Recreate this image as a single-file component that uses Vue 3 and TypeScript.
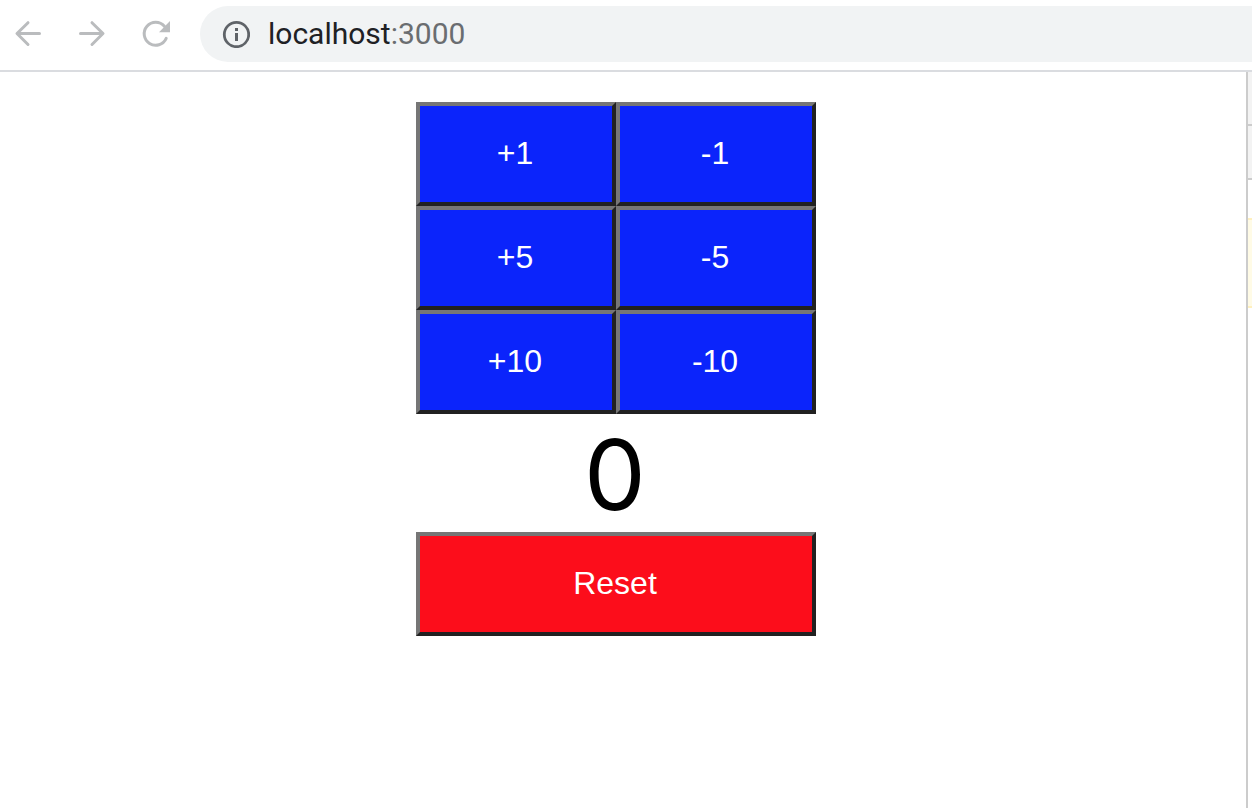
<script setup lang="ts">
import { ref } from 'vue'

const count = ref<number>(0)
const steps: number[] = [1, -1, 5, -5, 10, -10]

function label(step: number): string {
  return step > 0 ? `+${step}` : `${step}`
}
</script>

<template>
  <div class="browser">
    <header class="toolbar">
      <nav class="nav" aria-label="Browser navigation">
        <button class="nav-button" type="button" aria-label="Back">
          <svg viewBox="0 0 32 32"><path d="M27.5 15.5H5.5M16 4.7L5 15.5l11 11" /></svg>
        </button>
        <button class="nav-button" type="button" aria-label="Forward">
          <svg viewBox="0 0 32 32"><path d="M4.5 15.5h22M16 4.7l11 10.8-11 11" /></svg>
        </button>
        <button class="nav-button" type="button" aria-label="Reload">
          <svg viewBox="0 0 32 32">
            <path d="M26.2 20.4A11.5 11.5 0 1 1 24.4 8.2" />
            <path class="solid" d="M30 3V14.2H19z" />
          </svg>
        </button>
      </nav>
      <div class="address">
        <svg class="info" viewBox="0 0 28 28" aria-hidden="true">
          <circle cx="14.5" cy="14.5" r="12.2" />
          <path d="M13 8h3v3h-3zM13 13h3v8h-3z" />
        </svg>
        <a class="url" href="#"><span class="host">localhost</span>:3000</a>
      </div>
    </header>
    <div class="content">
      <main class="page">
        <div class="counter">
          <div class="steps">
            <button
              v-for="step in steps"
              :key="step"
              class="key"
              type="button"
              @click="count += step"
            >{{ label(step) }}</button>
          </div>
          <output class="value">{{ count }}</output>
          <button class="key reset" type="button" @click="count = 0">Reset</button>
        </div>
      </main>
      <aside class="panel">
        <div class="bar"></div>
        <div class="bar"></div>
        <div class="blank"></div>
        <div class="warning"></div>
      </aside>
    </div>
  </div>
</template>

<style>
body {
  background: #ffffff;
}
</style>

<style scoped>
.browser {
  display: flex;
  flex-direction: column;
  min-height: 100vh;
}

.toolbar {
  display: flex;
  align-items: center;
  box-sizing: border-box;
  height: 72px;
  padding-bottom: 2px;
  border-bottom: 2px solid #dadce0;
}

.nav {
  display: flex;
  gap: 32px;
  padding: 0 28px 0 12px;
}

.nav-button {
  width: 32px;
  height: 32px;
  padding: 0;
  border: 0;
  background: none;
}

.nav-button svg {
  display: block;
  fill: none;
  stroke: #babcbe;
  stroke-width: 3;
  stroke-linecap: round;
  stroke-linejoin: round;
}

.nav-button .solid {
  fill: #babcbe;
  stroke: none;
}

.address {
  display: flex;
  flex: 1;
  align-items: center;
  gap: 18px;
  height: 56px;
  padding-left: 22px;
  border-radius: 28px 0 0 28px;
  background: #f1f3f4;
}

.info {
  width: 28px;
  height: 28px;
  fill: #5f6368;
}

.info circle {
  fill: none;
  stroke: #5f6368;
  stroke-width: 2.8;
}

.url {
  font: 30px/56px Roboto, sans-serif;
  color: #6a6d70;
  text-decoration: none;
}

.host {
  color: #202124;
}

.content {
  display: flex;
  flex: 1;
}

.page {
  flex: 1;
  padding: 30px 14px 30px 0;
}

.counter {
  width: 400px;
  margin: 0 auto;
}

.steps {
  display: grid;
  grid-template-columns: 1fr 1fr;
}

.key {
  height: 104px;
  padding: 0 2px 2px 0;
  border: 4px solid;
  border-color: #767676 #212121 #212121 #767676;
  border-radius: 0;
  background: #0b24fb;
  color: #ffffff;
  font: 32px "Liberation Sans", Arial, sans-serif;
}

.value {
  display: block;
  height: 118px;
  padding-right: 2px;
  color: #000000;
  font: 98px/122px Inter, sans-serif;
  text-align: center;
}

.reset {
  width: 100%;
  background: #fc0d1b;
}

.panel {
  width: 4px;
  border-left: 2px solid #cccccc;
}

.bar {
  height: 52px;
  border-bottom: 2px solid #cccccc;
  background: #f3f3f3;
}

.blank {
  height: 38px;
}

.warning {
  height: 86px;
  border: solid #fff0bf;
  border-width: 2px 0;
  background: #fffbe6;
}
</style>
